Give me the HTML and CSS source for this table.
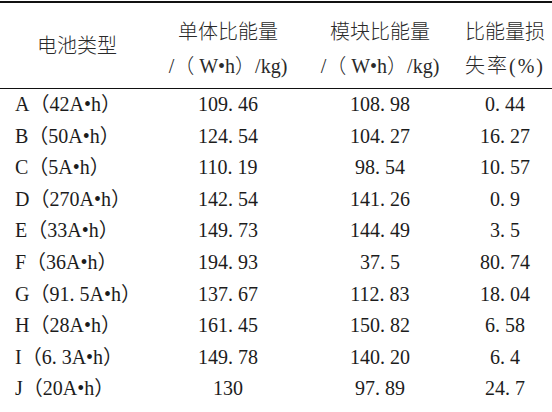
FILE: index.html
```html
<!DOCTYPE html>
<html lang="zh">
<head>
<meta charset="utf-8">
<link rel="stylesheet" href="styles.css">
</head>
<body>
<div class="data" role="table">
  <div class="hd type" role="columnheader">电池类型</div>
  <div class="hd" role="columnheader">单体比能量<br>/（ W•h）/kg)</div>
  <div class="hd" role="columnheader">模块比能量<br>/（ W•h）/kg)</div>
  <div class="hd" role="columnheader">比能量损<br><span class="loss">失率(%)</span></div>

  <div class="name">A（42A•h）</div><div class="v">109. 46</div><div class="v">108. 98</div><div class="v">0. 44</div>
  <div class="name">B（50A•h）</div><div class="v">124. 54</div><div class="v">104. 27</div><div class="v">16. 27</div>
  <div class="name">C（5A•h）</div><div class="v">110. 19</div><div class="v">98. 54</div><div class="v">10. 57</div>
  <div class="name">D（270A•h）</div><div class="v">142. 54</div><div class="v">141. 26</div><div class="v">0. 9</div>
  <div class="name">E（33A•h）</div><div class="v">149. 73</div><div class="v">144. 49</div><div class="v">3. 5</div>
  <div class="name">F（36A•h）</div><div class="v">194. 93</div><div class="v">37. 5</div><div class="v">80. 74</div>
  <div class="name">G（91. 5A•h）</div><div class="v">137. 67</div><div class="v">112. 83</div><div class="v">18. 04</div>
  <div class="name">H（28A•h）</div><div class="v">161. 45</div><div class="v">150. 82</div><div class="v">6. 58</div>
  <div class="name">I（6. 3A•h）</div><div class="v">149. 78</div><div class="v">140. 20</div><div class="v">6. 4</div>
  <div class="name">J（20A•h）</div><div class="v">130</div><div class="v">97. 89</div><div class="v">24. 7</div>
</div>
</body>
</html>
```
FILE: styles.css
```css
html, body {
  margin: 0;
  padding: 0;
  background: #ffffff;
}
body {
  width: 552px;
  height: 412px;
  overflow: hidden;
  font-family: "Liberation Serif", "Noto Sans CJK SC", serif;
  color: #1c1c1c;
}
.data {
  margin-top: 1px;
  width: 552px;
  display: grid;
  grid-template-columns: 154px 148px 156px 94px;
  grid-template-rows: 86px;
  grid-auto-rows: 31.6px;
  border-top: 2px solid #111111;
}
.hd {
  box-sizing: border-box;
  height: 86px;
  padding-top: 12px;
  font-size: 20px;
  font-weight: 300;
  line-height: 34px;
  text-align: center;
  white-space: nowrap;
  border-bottom: 1px solid #111111;
  color: #2a2a2a;
}
.hd.type {
  padding-top: 26px;
}
.loss {
  letter-spacing: 2px;
}
.name, .v {
  font-size: 20px;
  line-height: 31.6px;
  white-space: nowrap;
}
.v {
  text-align: center;
}
.name {
  padding-left: 15px;
}
```
